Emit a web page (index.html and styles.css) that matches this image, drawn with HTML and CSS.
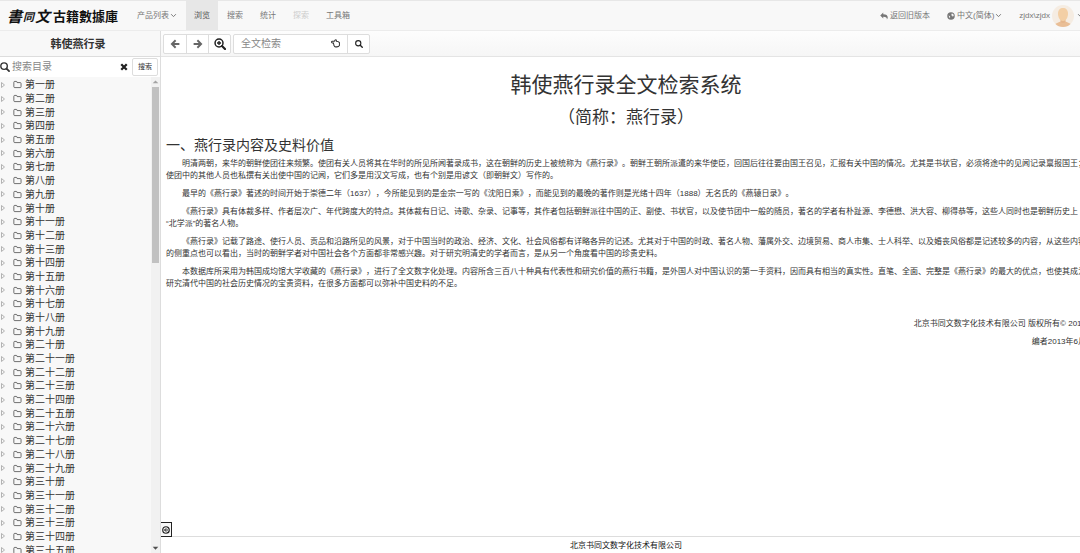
FILE: index.html
```html
<!DOCTYPE html>
<html lang="zh-CN">
<head>
<meta charset="utf-8">
<meta name="viewport" content="width=device-width, initial-scale=1">
<title>韩使燕行录</title>
<link rel="stylesheet" href="styles.css">
</head>
<body>
<svg class="sprite" aria-hidden="true">
  <symbol id="search" viewBox="0 0 16 16"><circle cx="6.5" cy="6.5" r="5.2" fill="none" stroke="currentColor" stroke-width="2.2"/><path d="M10.500 10.500l4 4" stroke="currentColor" stroke-width="2.8" stroke-linecap="round"/></symbol>
  <symbol id="zoom" viewBox="0 0 16 16"><circle cx="6.7" cy="6.7" r="5.3" fill="none" stroke="currentColor" stroke-width="2"/><path d="M6.7 4v5.4M4 6.7h5.4" stroke="currentColor" stroke-width="1.8"/><path d="M10.7 10.7l4 4" stroke="currentColor" stroke-width="2.8" stroke-linecap="round"/></symbol>
  <symbol id="arrow" viewBox="0 0 16 16"><path d="M9 2L3 8l6 6M3.500 8H15" fill="none" stroke="currentColor" stroke-width="3"/></symbol>
  <symbol id="chevron" viewBox="0 0 8 8"><path d="M1.300 2.500L4 5.300 6.700 2.500" fill="none" stroke="currentColor" stroke-width="1.100"/></symbol>
  <symbol id="folder" viewBox="0 0 16 16"><path d="M1.500 12V4q0-1.500 1.500-1.500h2.800q1.400 0 1.400 1.500v.6h5.600q1.500 0 1.500 1.500V12q0 1.500-1.500 1.500H3q-1.500 0-1.500-1.500z" fill="none" stroke="currentColor" stroke-width="1.500"/></symbol>
  <symbol id="caret" viewBox="0 0 6 8"><path d="M1.500 1.500L4.500 4l-3 2.500z" fill="none" stroke="currentColor" stroke-width=".9"/></symbol>
</svg>

<div class="app">
  <header class="navbar">
    <a class="brand" href="#"><span class="brand-mark">書<small>同</small>文</span><span class="brand-name">古籍數據庫</span></a>
    <nav class="menu">
      <a href="#">产品列表<svg class="icon-xs"><use href="#chevron"/></svg></a>
      <a class="active" href="#">浏览</a>
      <a href="#">搜索</a>
      <a href="#">统计</a>
      <a class="disabled" href="#">探索</a>
      <a href="#">工具箱</a>
    </nav>
    <nav class="menu menu-right">
      <a href="#"><svg class="icon-s" viewBox="0 0 16 16"><path d="M6.500 1v3.500c6 0 9 2.400 9 6.500 0 1.500-.7 3-1.800 4 .7-4-1.700-5.500-7.200-5.500V13L.5 6.900z" fill="currentColor"/></svg>返回旧版本</a>
      <a href="#"><svg class="icon-s" viewBox="0 0 16 16"><circle cx="8" cy="8" r="7.500" fill="currentColor"/><path d="M9.500 3l3 1 1 3.500-2 2-1-2-2-1zM3 7l2.500 1 1 2-1 2.500z" fill="#f8f8f8"/></svg>中文(简体)<svg class="icon-xs"><use href="#chevron"/></svg></a>
      <a class="user" href="#">zjdx\zjdx<svg class="avatar" viewBox="0 0 44 44"><defs><clipPath id="round"><circle cx="22" cy="22" r="22"/></clipPath></defs><g clip-path="url(#round)"><rect width="44" height="44" fill="#f5ece2"/><path d="M4 44c0-7 7-8 13-11h10c6 3 13 4 13 11z" fill="#e9be96"/><path d="M17 27h10v7q-5 4-10 0z" fill="#e5b78d"/><path d="M12 17c0-7 4-11 10-11s10 4 10 11c0 8-4 15-10 15s-10-7-10-15z" fill="#f3cfa5"/></g></svg><svg class="icon-xs"><use href="#chevron"/></svg></a>
    </nav>
  </header>

  <div class="body">
    <aside class="sidebar">
      <h2 class="book">韩使燕行录</h2>
      <form class="catalog-search">
        <svg class="icon-m"><use href="#search"/></svg>
        <input type="text" placeholder="搜索目录" aria-label="搜索目录">
        <button class="clear" type="button" aria-label="清除"><svg class="icon-s" viewBox="0 0 16 16"><path d="M2.500 2.500l11 11M13.500 2.500l-11 11" stroke="currentColor" stroke-width="4.500"/></svg></button>
        <button class="find" type="button">搜索</button>
      </form>
      <div class="tree-pane">
        <ul class="tree" id="tree"></ul>
        <div class="scrollbar" aria-hidden="true">
          <svg class="scroll-arrow up" viewBox="0 0 8 8"><path d="M1.500 5.500h5L4 3z"/></svg>
          <div class="thumb"></div>
          <svg class="scroll-arrow" viewBox="0 0 8 8"><path d="M1.500 2.500h5L4 5z"/></svg>
        </div>
      </div>
    </aside>

    <main class="main">
      <div class="toolbar">
        <div class="group">
          <button type="button" aria-label="后退"><svg class="icon-m"><use href="#arrow"/></svg></button>
          <button type="button" aria-label="前进"><svg class="icon-m flip"><use href="#arrow"/></svg></button>
          <button class="dark" type="button" aria-label="放大"><svg class="icon-l"><use href="#zoom"/></svg></button>
        </div>
        <form class="group">
          <div class="field">
            <input type="text" placeholder="全文检索" aria-label="全文检索">
            <svg class="icon-s" viewBox="0 0 16 16"><path d="M1 5.500Q1 4 2.500 4H6q1-2.500 2.500-2.500Q10 1.700 9.500 4q4 .3 5.500 2.500v5q-1.500 2.500-4.500 2.500H8q-2 0-2.300-2-1.200-1-.7-2.500Q4 8.500 4.500 7h-2Q1 7 1 5.500z" fill="none" stroke="currentColor" stroke-width="1.800"/></svg>
          </div>
          <button class="dark" type="button" aria-label="检索"><svg class="icon-s"><use href="#search"/></svg></button>
        </form>
      </div>
      <article class="article">
        <h1>韩使燕行录全文检索系统</h1>
        <h2>（简称：燕行录）</h2>
        <h3>一、燕行录内容及史料价值</h3>
        <p>明清两朝，来华的朝鲜使团往来频繁。使团有关人员将其在华时的所见所闻著录成书，这在朝鲜的历史上被统称为《燕行录》。朝鲜王朝所派遣的来华使臣，回国后往往要由国王召见，汇报有关中国的情况。尤其是书状官，必须将途中的见闻记录禀报国王；<br>使团中的其他人员也私撰有关出使中国的记闻，它们多是用汉文写成，也有个别是用谚文（即朝鲜文）写作的。</p>
        <p>最早的《燕行录》著述的时间开始于崇德二年（1637），今所能见到的是金宗一写的《沈阳日乘》，而能见到的最晚的著作则是光绪十四年（1888）无名氏的《燕辕日录》。</p>
        <p>《燕行录》具有体裁多样、作者层次广、年代跨度大的特点。其体裁有日记、诗歌、杂录、记事等，其作者包括朝鲜派往中国的正、副使、书状官，以及使节团中一般的随员，著名的学者有朴趾源、李德懋、洪大容、柳得恭等，这些人同时也是朝鲜历史上<br>“北学派”的著名人物。</p>
        <p>《燕行录》记载了路途、使行人员、贡品和沿路所见的风景，对于中国当时的政治、经济、文化、社会风俗都有详略各异的记述。尤其对于中国的时政、著名人物、藩属外交、边境贸易、商人市集、士人科举、以及婚丧风俗都是记述较多的内容，从这些内容<br>的侧重点也可以看出，当时的朝鲜学者对中国社会各个方面都非常感兴趣。对于研究明清史的学者而言，是从另一个角度看中国的珍贵史料。</p>
        <p>本数据库所采用为韩国成均馆大学收藏的《燕行录》，进行了全文数字化处理。内容所含三百八十种具有代表性和研究价值的燕行书籍，是外国人对中国认识的第一手资料，因而具有相当的真实性。直笔、全面、完整是《燕行录》的最大的优点，也使其成为<br>研究清代中国的社会历史情况的宝贵资料，在很多方面都可以弥补中国史料的不足。</p>
        <div class="credits">
          <p>北京书同文数字化技术有限公司 版权所有© 2013</p>
          <p>编者2013年6月</p>
        </div>
      </article>
      <footer class="footer"><span>北京书同文数字化技术有限公司</span></footer>
      <button class="collapse" type="button" aria-label="收起目录"><svg class="icon-s" viewBox="0 0 16 16"><circle cx="8" cy="8" r="6.500" fill="none" stroke="currentColor" stroke-width="2.400"/><path d="M8.500 4.500L5 8l3.500 3.500M5 8h7" fill="none" stroke="currentColor" stroke-width="2"/></svg></button>
    </main>
  </div>
</div>
<script src="tree.js"></script>
</body>
</html>
```
FILE: styles.css
```css
* { box-sizing: border-box; }
body {
  margin: 0;
  font: 8px/12px "Liberation Sans", "Noto Sans CJK SC", sans-serif;
  color: #333;
  background: #fff;
  text-spacing-trim: space-all;
}
h1, h2, h3, p, ul { margin: 0; padding: 0; font-weight: 400; }
a { color: inherit; text-decoration: none; }
button, input { font: inherit; color: inherit; margin: 0; padding: 0; border: 0; background: none; }
button { display: flex; align-items: center; justify-content: center; }
input { min-width: 0; flex: 1; outline: 0; font-size: 10px; }
input::placeholder { color: #888; opacity: 1; }
svg { flex: none; }
.sprite { position: absolute; width: 0; height: 0; }
.icon-xs { width: 7px; height: 7px; margin-left: 1px; }
.icon-s { width: 8px; height: 8px; }
.icon-m { width: 10px; height: 10px; }
.icon-l { width: 12px; height: 12px; }
.flip { transform: scaleX(-1); }

.app { height: 100vh; display: flex; flex-direction: column; overflow: hidden; }
.navbar {
  display: flex;
  flex: none;
  height: 31px;
  background: #f8f8f8;
  border-top: 1px solid #e7e7e7;
  border-bottom: 1px solid #ececec;
  color: #777;
}
.brand { display: flex; align-items: center; width: 129px; padding-left: 7px; color: #111; font-family: "Noto Sans CJK TC", sans-serif; font-weight: 700; white-space: nowrap; }
.brand-mark { display: flex; align-items: center; justify-content: space-between; width: 43px; margin-right: 3px; font-size: 15px; font-style: italic; }
.brand-mark small { font-size: 11px; }
.brand-name { font-size: 13px; }
.menu { display: flex; gap: 1px; }
.menu a { display: flex; align-items: center; padding: 0 8px; white-space: nowrap; }
.menu .active { background: #e7e7e7; color: #555; }
.menu .disabled { color: #ccc; }
.menu-right { margin-left: auto; margin-right: -4px; }
.menu-right .icon-s { margin-right: 2px; }
.menu-right .user { padding-right: 0; }
.avatar { width: 22px; height: 22px; margin: 0 2px; }

.body { flex: 1; min-height: 0; display: flex; }
.sidebar { flex: none; width: 161px; display: flex; flex-direction: column; border-right: 1px solid #ddd; background: #f8f8f8; }
.book { flex: none; height: 26px; font-size: 11px; line-height: 26px; font-weight: 700; padding-right: 4px; text-align: center; border-bottom: 1px solid #ddd; }
.catalog-search { flex: none; display: flex; align-items: center; height: 20px; padding-right: 2px; background: #fff; }
.catalog-search input { padding-left: 2px; }
.clear { width: 16px; height: 18px; color: #222; }
.find { width: 26px; height: 18px; border: 1px solid #ddd; border-radius: 2px; font-size: 7px; }
.tree-pane { flex: 1; min-height: 0; display: flex; overflow: hidden; }
.tree { flex: 1; height: calc(100% + 4px); padding-top: 1px; display: grid; grid-auto-rows: 1fr; list-style: none; }
.tree li { display: flex; align-items: center; min-height: 0; font-size: 10px; line-height: 13px; }
.tree .caret { width: 6px; height: 8px; margin-right: 7px; color: #aaa; }
.tree .folder { width: 9px; height: 9px; margin-right: 3px; color: #555; }
.scrollbar { width: 9px; display: flex; flex-direction: column; background: #f1f1f1; }
.scroll-arrow { width: 9px; height: 9px; fill: #505050; }
.up { fill: #a3a3a3; }
.thumb { width: 7px; height: 37%; margin: 1px 1px auto; background: #c1c1c1; }

.main { flex: 1; min-width: 0; display: flex; flex-direction: column; position: relative; overflow: hidden; }
.toolbar { flex: none; display: flex; align-items: center; gap: 2px; height: 26px; padding-left: 2px; border-bottom: 1px solid #e4e4e4; background: linear-gradient(#fdfdfd, #f6f6f6); }
.group { display: flex; height: 20px; border: 1px solid #ddd; border-radius: 2px; background: #fff; }
.group button { width: 22px; color: #666; }
.group > * + * { border-left: 1px solid #ddd; }
.group .dark { color: #222; }
.field { display: flex; align-items: center; width: 113px; padding: 0 7px; }
.field .icon-s { width: 9px; height: 9px; }
.article { flex: 1; min-height: 0; width: calc(100% + 11px); padding: 14px 5px 0; white-space: nowrap; }
.article h1 { font-size: 21px; line-height: 28px; text-align: center; }
.article h2 { font-size: 17px; line-height: 24px; margin-top: 7px; text-align: center; }
.article h3 { font-size: 14px; line-height: 20px; margin: 5px 0 3px; }
.article p { margin-bottom: 6px; text-indent: 2em; }
.credits { padding-top: 22px; text-align: right; }
.footer { flex: none; width: calc(100% + 11px); height: 17px; border-top: 1px solid #ddd; line-height: 18px; color: #111; text-align: center; }
.collapse { position: absolute; left: -1px; bottom: 16px; width: 12px; height: 15px; border: 1px solid #222; border-left: 0; background: #f8f8f8; color: #222; }
```
FILE: tree.js
```js
const digits = ['', '一', '二', '三', '四', '五', '六', '七', '八', '九'];

function numeral(n) {
  const tens = Math.floor(n / 10);
  const prefix = tens ? (tens > 1 ? digits[tens] : '') + '十' : '';
  return prefix + digits[n % 10];
}

document.getElementById('tree').innerHTML = Array.from({ length: 35 }, (_, i) =>
  `<li><svg class="caret"><use href="#caret"/></svg><svg class="folder"><use href="#folder"/></svg>第${numeral(i + 1)}册</li>`
).join('');
```
